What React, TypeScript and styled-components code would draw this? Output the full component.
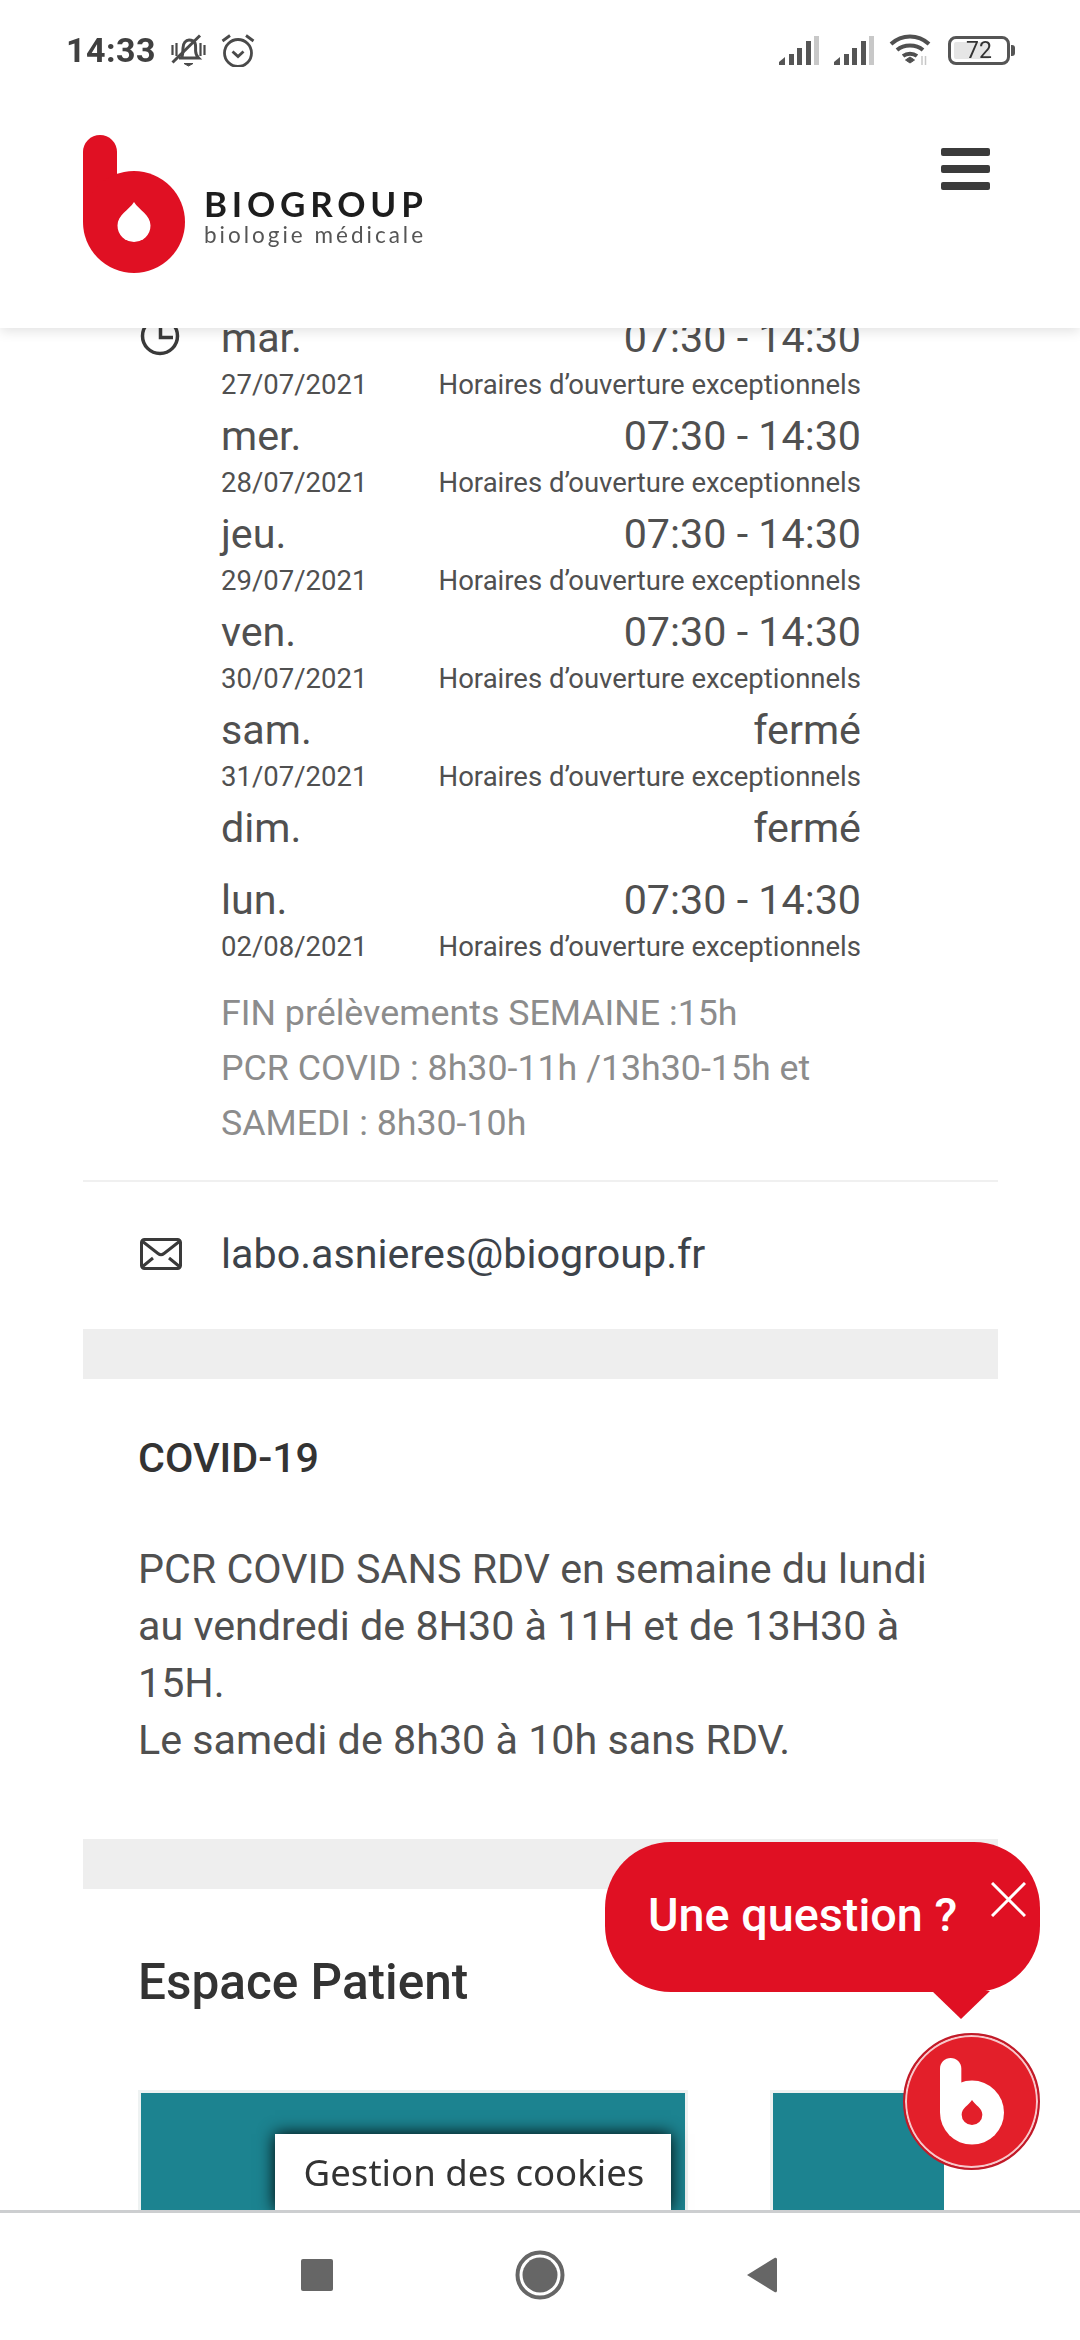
import styled, { createGlobalStyle } from "styled-components";

const GlobalStyle = createGlobalStyle`
  * {
    box-sizing: border-box;
  }
  html, body {
    margin: 0;
    padding: 0;
    background: #fff;
    overflow: hidden;
    font-family: Roboto, "Liberation Sans", sans-serif;
  }
`;

interface Opening {
  day: string;
  hours: string;
  date?: string;
}

const openings: Opening[] = [
  { day: "mar.", hours: "07:30 - 14:30", date: "27/07/2021" },
  { day: "mer.", hours: "07:30 - 14:30", date: "28/07/2021" },
  { day: "jeu.", hours: "07:30 - 14:30", date: "29/07/2021" },
  { day: "ven.", hours: "07:30 - 14:30", date: "30/07/2021" },
  { day: "sam.", hours: "fermé", date: "31/07/2021" },
  { day: "dim.", hours: "fermé" },
  { day: "lun.", hours: "07:30 - 14:30", date: "02/08/2021" },
];

const BMark = ({ color, drop, width }: { color: string; drop: string; width: number }) => (
  <svg width={width} viewBox="0 0 102 138" style={{ display: "block" }}>
    <path d="M0 87V17a17 17 0 0 1 34 0V87Z" fill={color} />
    <circle cx="51" cy="87" r="51" fill={color} />
    <path
      d="M51 67C56 75 67.5 80 67.5 90.5A16.5 16.5 0 0 1 34.5 90.5C34.5 80 46 75 51 67Z"
      fill={drop}
    />
  </svg>
);

const Signal = () => (
  <svg width="40" height="29" viewBox="0 0 40 29">
    <path d="M0 29v-3l6-5v8Z" fill="#555" />
    <rect x="10" y="18" width="5" height="11" fill="#555" />
    <rect x="18" y="12" width="5" height="17" fill="#555" />
    <rect x="27" y="5" width="5" height="24" fill="#555" />
    <rect x="35" y="0" width="5" height="29" fill="#c8c8c8" />
  </svg>
);

const App = () => {
  return (
    <>
      <GlobalStyle />
      <Content>
        <Hours>
          <ClockIcon viewBox="0 0 40 40" width="40" height="40">
            <circle cx="20" cy="20" r="17.5" fill="none" stroke="#3a3a3a" strokeWidth="3.5" />
            <path d="M20.5 8v13.5H33" fill="none" stroke="#3a3a3a" strokeWidth="3.5" />
          </ClockIcon>
          <div>
            {openings.map((item) => (
              <DayRow key={item.day}>
                <DayLine>
                  <span>{item.day}</span>
                  <span>{item.hours}</span>
                </DayLine>
                {item.date && (
                  <DateLine>
                    <span>{item.date}</span>
                    <span>Horaires d’ouverture exceptionnels</span>
                  </DateLine>
                )}
              </DayRow>
            ))}
            <Note>
              FIN prélèvements SEMAINE :15h
              <br />
              PCR COVID : 8h30-11h /13h30-15h et
              <br />
              SAMEDI : 8h30-10h
            </Note>
          </div>
        </Hours>

        <MailRow>
          <svg width="42" height="32" viewBox="0 0 42 32">
            <rect x="1.5" y="1.5" width="39" height="29" rx="3" fill="none" stroke="#3a3a3a" strokeWidth="3" />
            <path
              d="M2 3l16 12.5c2 1.6 4 1.6 6 0L40 3M2 29l11-9M40 29l-11-9"
              fill="none"
              stroke="#3a3a3a"
              strokeWidth="3"
            />
          </svg>
          <MailText>labo.asnieres@biogroup.fr</MailText>
        </MailRow>

        <Band />

        <Covid>
          <CovidTitle>COVID-19</CovidTitle>
          <CovidText>
            PCR COVID SANS RDV en semaine du lundi au vendredi de 8H30 à 11H et de 13H30 à 15H.
            <br />
            Le samedi de 8h30 à 10h sans RDV.
          </CovidText>
        </Covid>

        <Band />

        <PatientTitle>Espace Patient</PatientTitle>
        <Cards>
          <Card $width={550} />
          <Card $width={174} />
        </Cards>
      </Content>

      <Header>
        <StatusBar>
          <StatusGroup>
            <Clock>14:33</Clock>
            <svg width="35" height="33" viewBox="0 0 35 33" fill="none" stroke="#4a4a4a" strokeWidth="3">
              <path d="M1.5 11v10M5.5 9v13M29.5 9v13M33.5 11v10" strokeWidth="2.2" />
              <path d="M11 23c1-3 1-6 1-9 0-5 3-8 6-8s5 1 6 3c1 2 .5 6 .6 8 .1 3 1 5 3 7H8" />
              <path d="M1.5 28.5L29 1.5" />
              <path d="M13 29.5h9l-4.5 2.5Z" fill="#4a4a4a" strokeWidth="1" />
            </svg>
            <svg width="34" height="33" viewBox="0 0 34 33" fill="none" stroke="#4a4a4a" strokeWidth="2.8">
              <circle cx="17" cy="19" r="13.5" />
              <path d="M11.5 17.5l5.5 5 5.5-5M1.5 7L9 1.5M32.5 7L25 1.5" />
            </svg>
          </StatusGroup>
          <StatusGroup>
            <Signal />
            <Signal />
            <svg width="44" height="32" viewBox="0 0 44 32" fill="none" stroke="#505050" strokeWidth="4">
              <path d="M2 10c11-10 27-10 38 0M8 16c7-6 19-6 26 0M14 22c4-3 10-3 14 0" />
              <path d="M16.5 26l4.5-3 4.5 3-4.5 3Z" fill="#505050" strokeWidth="1" />
              <path d="M33 22v9M36.5 22v9" stroke="#c8c8c8" strokeWidth="1.5" />
            </svg>
            <Battery>
              <BatteryFill />
              <BatteryLevel>72</BatteryLevel>
            </Battery>
          </StatusGroup>
        </StatusBar>
        <Brand>
          <BrandLogo>
            <BMark color="#e01023" drop="#fff" width={102} />
            <BrandText>
              <BrandName>BIOGROUP</BrandName>
              <BrandTagline>biologie médicale</BrandTagline>
            </BrandText>
          </BrandLogo>
          <Burger>
            <span />
            <span />
            <span />
          </Burger>
        </Brand>
      </Header>

      <Bubble>
        <BubbleLabel>Une question ?</BubbleLabel>
        <svg width="35" height="35" viewBox="0 0 35 35" stroke="#fff" strokeWidth="3">
          <path d="M1 1l33 33M34 1L1 34" />
        </svg>
      </Bubble>

      <ChatButton>
        <BMark color="#fff" drop="#e31f2a" width={64} />
      </ChatButton>

      <CookieButton>Gestion des cookies</CookieButton>

      <NavBar>
        <NavSquare />
        <svg width="50" height="50" viewBox="0 0 50 50">
          <circle cx="25" cy="25" r="22.5" fill="none" stroke="#666" strokeWidth="4" />
          <circle cx="25" cy="25" r="17.5" fill="#666" />
        </svg>
        <svg width="32" height="36" viewBox="0 0 32 36">
          <path d="M1 18L28.5 1c1.5-.8 2.5 0 2.5 1.5v31c0 1.5-1 2.3-2.5 1.5Z" fill="#666" />
        </svg>
      </NavBar>
    </>
  );
};

// the page is scrolled under the fixed header, so the list starts behind it
const Content = styled.main`
  width: 915px;
  height: 2340px;
  margin-left: 83px;
  padding-top: 310px;
  overflow: hidden;
`;

const Hours = styled.section`
  display: grid;
  grid-template-columns: 81px 640px;
  padding: 0 0 29px 57px;
  border-bottom: 2px solid #f0f0f0;
  color: #505050;
`;

const ClockIcon = styled.svg`
  margin-top: 6px;
`;

const DayRow = styled.div`
  min-height: 72px;
  padding-bottom: 5px;
`;

const DayLine = styled.div`
  display: flex;
  justify-content: space-between;
  font-size: 41.25px;
  line-height: 57px;
`;

const DateLine = styled.div`
  display: flex;
  justify-content: space-between;
  font-size: 27.5px;
  line-height: 36px;
`;

const Note = styled.p`
  margin: 16px 0 0;
  font-size: 35.75px;
  line-height: 55px;
  color: #8c8c8c;
  white-space: nowrap;
`;

const MailRow = styled.div`
  display: flex;
  align-items: center;
  gap: 39px;
  height: 147px;
  padding: 0 0 4px 57px;
`;

const MailText = styled.span`
  font-size: 41.25px;
  color: #3d434a;
`;

const Band = styled.div`
  height: 50px;
  background: #eee;
`;

const Covid = styled.section`
  padding: 50px 55px 70px;
`;

const CovidTitle = styled.h3`
  margin: 0;
  font-size: 41.25px;
  line-height: 58px;
  font-weight: 500;
  color: #333;
`;

const CovidText = styled.p`
  margin: 54px 0 0;
  font-size: 41.25px;
  line-height: 57px;
  color: #505050;
`;

const PatientTitle = styled.h2`
  margin: 0;
  padding: 61px 55px 0;
  font-size: 49.5px;
  line-height: 64px;
  font-weight: 500;
  color: #333;
`;

const Cards = styled.div`
  display: flex;
  gap: 82px;
  margin-top: 76px;
  padding-left: 55px;
`;

const Card = styled.div<{ $width: number }>`
  width: ${({ $width }) => $width}px;
  height: 400px;
  background: #1c8390;
  border: 3px solid #eef2f2;
  border-right-width: ${({ $width }) => ($width < 200 ? 0 : 3)}px;
`;

const Header = styled.header`
  position: fixed;
  top: 0;
  left: 0;
  width: 1080px;
  height: 328px;
  background: #fff;
  box-shadow: 0 3px 12px rgba(0, 0, 0, 0.12);
`;

const StatusBar = styled.div`
  display: flex;
  justify-content: space-between;
  align-items: center;
  height: 100px;
  padding: 0 70px 0 66px;
`;

const StatusGroup = styled.div`
  display: flex;
  align-items: center;
  gap: 15px;
`;

const Clock = styled.span`
  font-size: 34px;
  font-weight: 700;
  color: #404040;
  letter-spacing: 0.5px;
`;

const Battery = styled.div`
  position: relative;
  width: 62px;
  height: 29px;
  border: 3.5px solid #555;
  border-radius: 8px;
  padding: 3px;

  &::after {
    content: "";
    position: absolute;
    left: 60px;
    top: 6px;
    width: 4px;
    height: 11px;
    border-radius: 0 3px 3px 0;
    background: #555;
  }
`;

const BatteryFill = styled.div`
  width: 72%;
  height: 100%;
  background: #e6e6e6;
  border-radius: 2px;
`;

const BatteryLevel = styled.span`
  position: absolute;
  inset: 0;
  display: flex;
  align-items: center;
  justify-content: center;
  font-size: 23px;
  color: #333;
`;

const Brand = styled.div`
  display: flex;
  justify-content: space-between;
  align-items: flex-start;
  padding: 35px 90px 0 83px;
`;

const BrandLogo = styled.div`
  display: flex;
  gap: 19px;
`;

const BrandText = styled.div`
  display: flex;
  flex-direction: column;
  margin-top: 50px;
  color: #1d1d1d;
`;

const BrandName = styled.span`
  font-family: Lato, sans-serif;
  font-size: 35px;
  line-height: 36px;
  font-weight: 700;
  letter-spacing: 4.8px;
`;

const BrandTagline = styled.span`
  font-family: Lato, sans-serif;
  font-size: 22.5px;
  line-height: 28px;
  color: #555;
  letter-spacing: 3px;
  white-space: nowrap;
`;

const Burger = styled.div`
  display: flex;
  flex-direction: column;
  gap: 9px;
  width: 49px;
  margin-top: 13px;

  span {
    height: 8px;
    border-radius: 2px;
    background: #3b3b3b;
  }
`;

const Bubble = styled.aside`
  position: fixed;
  left: 605px;
  top: 1842px;
  display: flex;
  align-items: flex-start;
  justify-content: space-between;
  width: 435px;
  height: 150px;
  padding: 40px 14px 0 43px;
  border-radius: 66px;
  background: #e01023;

  &::after {
    content: "";
    position: absolute;
    left: 327px;
    bottom: -27px;
    border-left: 29px solid transparent;
    border-right: 29px solid transparent;
    border-top: 28px solid #e01023;
  }
`;

const BubbleLabel = styled.span`
  font-size: 46.75px;
  line-height: 66px;
  font-weight: 500;
  color: #fff;
`;

const ChatButton = styled.button`
  position: fixed;
  left: 903px;
  top: 2033px;
  display: flex;
  align-items: center;
  justify-content: center;
  width: 137px;
  height: 137px;
  padding: 0;
  border: 2px solid #c01a28;
  border-radius: 50%;
  background: #e31f2a;
  box-shadow: inset 0 0 0 2px #f7c8cb;
`;

const CookieButton = styled.button`
  position: fixed;
  left: 275px;
  top: 2134px;
  width: 396px;
  height: 76px;
  padding: 0 0 0 2px;
  border: 0;
  border-radius: 0;
  background: #fff;
  text-align: center;
  font-family: "Noto Sans", sans-serif;
  font-size: 36.6px;
  line-height: 76px;
  color: #333;
  box-shadow: 0 0 16px #000;
`;

const NavBar = styled.nav`
  position: fixed;
  left: 0;
  bottom: 0;
  display: flex;
  align-items: center;
  gap: 181.5px;
  width: 1080px;
  height: 130px;
  padding: 0 0 3px 301px;
  background: #fff;
  border-top: 3px solid #ccced0;
`;

const NavSquare = styled.span`
  width: 32px;
  height: 32px;
  border-radius: 2px;
  background: #666;
`;

export default App;
